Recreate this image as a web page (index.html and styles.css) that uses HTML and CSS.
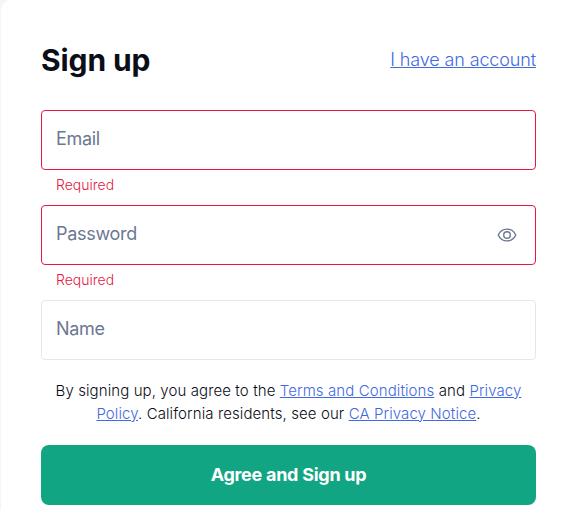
FILE: index.html
```html
<!DOCTYPE html>
<html lang="en">
  <head>
    <meta charset="UTF-8" />
    <meta name="viewport" content="width=device-width, initial-scale=1.0" />
    <title>Sign up</title>
    <link rel="stylesheet" href="styles.css">
  </head>
  <body>
    <main class="signup-card">
      <div class="card-header">
        <h1 class="card-title">Sign up</h1>
        <a class="link account-link" href="#">I have an account</a>
      </div>

      <form class="signup-form">
        <!-- Email -->
        <div class="field has-error">
          <input class="field-input" type="email" placeholder="Email" />
          <p class="field-error">Required</p>
        </div>

        <!-- Password -->
        <div class="field has-error">
          <div class="input-wrap">
            <input class="field-input" type="password" placeholder="Password" />
            <button class="toggle-password" type="button" aria-label="Show password">
              <svg width="20" height="20" viewBox="0 0 20 20" fill="none" stroke="currentColor" stroke-width="1.4">
                <path d="M1.2 10C3 6.2 6.2 4.1 10 4.1S17 6.2 18.8 10C17 13.8 13.8 15.9 10 15.9S3 13.8 1.2 10Z" />
                <circle cx="10" cy="10" r="3.3" />
              </svg>
            </button>
          </div>
          <p class="field-error">Required</p>
        </div>

        <!-- Name -->
        <div class="field">
          <input class="field-input" type="text" placeholder="Name" />
        </div>

        <p class="terms">
          By signing up, you agree to the <a class="link" href="#">Terms and Conditions</a> and <a class="link" href="#">Privacy Policy</a>. California residents, see our <a class="link" href="#">CA Privacy Notice</a>.
        </p>

        <button class="submit-btn" type="button">Agree and Sign up</button>
      </form>
    </main>
  </body>
</html>
```
FILE: styles.css
```css
:root {
  --primary: #12a584;
  --link: #4169e1;
  --error: #e8173f;
  --border: #e6e6f0;
  --muted: #6c7891;
  --text: #0b0d17;
}

* {
  margin: 0;
  padding: 0;
  box-sizing: border-box;
}

body {
  font-family: Inter, "Liberation Sans", sans-serif;
  background: #f5f5f6;
  color: var(--text);
  height: 100vh;
  overflow: hidden;
}

.signup-card {
  height: 100vh;
  margin-left: 1px;
  padding: 40px 36px 0 40px;
  background: white;
  border-top-left-radius: 10px;
}

.card-header {
  display: flex;
  justify-content: space-between;
  align-items: center;
  height: 40px;
  margin-bottom: 30px;
}

.card-title {
  font-size: 30px;
  font-weight: 700;
  line-height: 40px;
  letter-spacing: -0.1px;
}

.link {
  color: var(--link);
  text-decoration: underline;
}

.account-link {
  padding-bottom: 2px;
  font-size: 18px;
  font-weight: 300;
  letter-spacing: -0.13px;
}

.field {
  height: 95px;
}

.field:last-of-type {
  height: 60px;
}

.input-wrap {
  position: relative;
}

.field-input {
  display: block;
  width: 100%;
  height: 60px;
  padding: 0 14px 4px;
  border: 1px solid var(--border);
  border-radius: 4px;
  outline: none;
  background: white;
  font: 400 18px Inter, "Liberation Sans", sans-serif;
  letter-spacing: -0.3px;
}

.field-input::placeholder {
  color: var(--muted);
}

.has-error .field-input {
  border-color: var(--error);
}

.field-error {
  padding: 5px 15px 0;
  font-size: 14px;
  font-weight: 350;
  line-height: 20px;
  color: var(--error);
}

.toggle-password {
  position: absolute;
  top: 20px;
  right: 19px;
  width: 20px;
  height: 20px;
  border: none;
  background: none;
  color: var(--muted);
}

.toggle-password svg {
  display: block;
}

.terms {
  margin: 19px 0 20px;
  padding: 0 10px;
  font-size: 15px;
  font-weight: 300;
  line-height: 23px;
  letter-spacing: 0.1px;
  text-align: center;
}

.submit-btn {
  width: 100%;
  height: 60px;
  padding-bottom: 2px;
  border: none;
  border-radius: 8px;
  background: var(--primary);
  color: white;
  font: 700 18px Inter, "Liberation Sans", sans-serif;
  letter-spacing: -0.27px;
}
```
